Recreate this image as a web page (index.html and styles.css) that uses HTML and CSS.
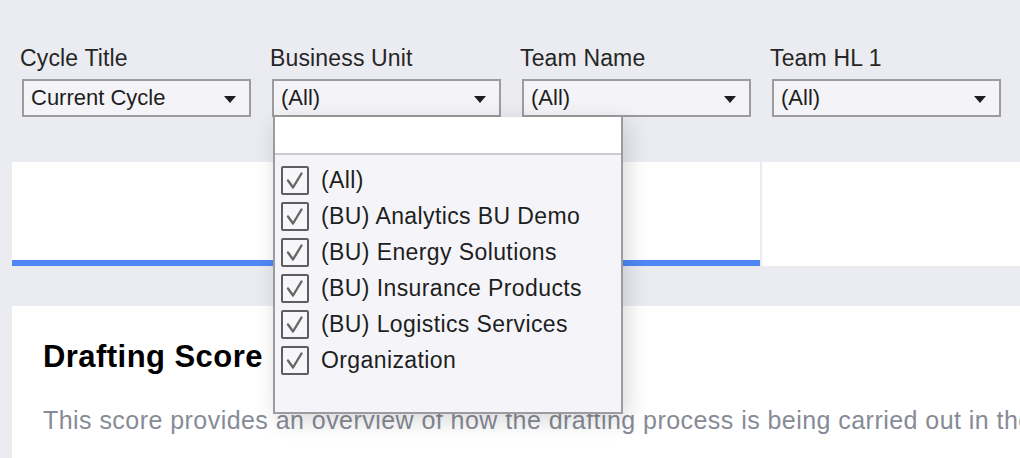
FILE: index.html
```html
<!DOCTYPE html>
<html lang="en">
<head>
<meta charset="utf-8">
<title>Drafting Score</title>
<link rel="stylesheet" href="styles.css">
</head>
<body>
<div class="page">
  <div class="filters">
    <div class="filter">
      <div class="filter-label">Cycle Title</div>
      <div class="select-wrap">
        <div class="select"><span class="select-value">Current Cycle</span><span class="arrow"></span></div>
      </div>
    </div>
    <div class="filter">
      <div class="filter-label">Business Unit</div>
      <div class="select-wrap">
        <div class="select"><span class="select-value">(All)</span><span class="arrow"></span></div>
        <div class="dropdown">
          <div class="dropdown-search"></div>
          <ul class="dropdown-list">
            <li class="option"><span class="checkbox"><svg viewBox="0 0 24 25" width="24" height="25"><path d="M5 12.5 L10 19.5 L18.5 5.5" fill="none" stroke="#686868" stroke-width="2.4" stroke-linecap="round" stroke-linejoin="round"/></svg></span><span class="option-text">(All)</span></li>
            <li class="option"><span class="checkbox"><svg viewBox="0 0 24 25" width="24" height="25"><path d="M5 12.5 L10 19.5 L18.5 5.5" fill="none" stroke="#686868" stroke-width="2.4" stroke-linecap="round" stroke-linejoin="round"/></svg></span><span class="option-text">(BU) Analytics BU Demo</span></li>
            <li class="option"><span class="checkbox"><svg viewBox="0 0 24 25" width="24" height="25"><path d="M5 12.5 L10 19.5 L18.5 5.5" fill="none" stroke="#686868" stroke-width="2.4" stroke-linecap="round" stroke-linejoin="round"/></svg></span><span class="option-text">(BU) Energy Solutions</span></li>
            <li class="option"><span class="checkbox"><svg viewBox="0 0 24 25" width="24" height="25"><path d="M5 12.5 L10 19.5 L18.5 5.5" fill="none" stroke="#686868" stroke-width="2.4" stroke-linecap="round" stroke-linejoin="round"/></svg></span><span class="option-text">(BU) Insurance Products</span></li>
            <li class="option"><span class="checkbox"><svg viewBox="0 0 24 25" width="24" height="25"><path d="M5 12.5 L10 19.5 L18.5 5.5" fill="none" stroke="#686868" stroke-width="2.4" stroke-linecap="round" stroke-linejoin="round"/></svg></span><span class="option-text">(BU) Logistics Services</span></li>
            <li class="option"><span class="checkbox"><svg viewBox="0 0 24 25" width="24" height="25"><path d="M5 12.5 L10 19.5 L18.5 5.5" fill="none" stroke="#686868" stroke-width="2.4" stroke-linecap="round" stroke-linejoin="round"/></svg></span><span class="option-text">Organization</span></li>
          </ul>
        </div>
      </div>
    </div>
    <div class="filter">
      <div class="filter-label">Team Name</div>
      <div class="select-wrap">
        <div class="select"><span class="select-value">(All)</span><span class="arrow"></span></div>
      </div>
    </div>
    <div class="filter">
      <div class="filter-label">Team HL 1</div>
      <div class="select-wrap">
        <div class="select"><span class="select-value">(All)</span><span class="arrow"></span></div>
      </div>
    </div>
  </div>

  <div class="tabs">
    <div class="tab tab-active"></div>
    <div class="tab"></div>
  </div>

  <div class="card">
    <h2 class="card-title">Drafting Score</h2>
    <p class="card-text">This score provides an overview of how the drafting process is being carried out in the organization.</p>
  </div>
</div>
</body>
</html>
```

FILE: styles.css
```css
html, body {
  margin: 0;
  padding: 0;
}

body {
  background: #ebecf1;
  font-family: "Liberation Sans", Arial, Helvetica, sans-serif;
  color: #222;
  overflow: hidden;
  width: 1020px;
  height: 458px;
}

.page {
  width: 1060px;
  padding-top: 44px;
}

.filters {
  display: flex;
  padding-left: 20px;
}

.filter {
  width: 250px;
}

.filter-label {
  font-size: 23px;
  line-height: 28px;
  letter-spacing: 0.15px;
  color: #262626;
  margin-bottom: 7px;
}

.select-wrap {
  position: relative;
  margin-left: 2px;
  width: 229px;
}

.select {
  width: 229px;
  height: 38px;
  box-sizing: border-box;
  border: 2px solid #9c9c9c;
  background: #f4f4f8;
  display: flex;
  align-items: center;
  justify-content: space-between;
  padding: 0 13px 0 7px;
}

.select-value {
  font-size: 22px;
  line-height: 34px;
  color: #1e1e1e;
}

.arrow {
  width: 0;
  height: 0;
  border-left: 6px solid transparent;
  border-right: 6px solid transparent;
  border-top: 7px solid #1e1e1e;
  margin-top: 2px;
}

.dropdown {
  position: absolute;
  left: 1px;
  top: 100%;
  width: 350px;
  height: 297px;
  box-sizing: border-box;
  border: 2px solid #9c9c9c;
  border-top: none;
  background: #f5f5f9;
  box-shadow: 4px 6px 22px rgba(0, 0, 0, 0.16);
  z-index: 5;
}

.dropdown-search {
  height: 36px;
  background: #ffffff;
  border-bottom: 2px solid #cbcbcf;
}

.dropdown-list {
  list-style: none;
  margin: 0;
  padding: 7px 0 0 6px;
}

.option {
  display: flex;
  align-items: center;
  height: 36px;
  gap: 12px;
}

.checkbox {
  width: 28px;
  height: 29px;
  box-sizing: border-box;
  border: 2px solid #5e5e5e;
  border-radius: 2px;
  background: #f7f7fa;
  display: flex;
  align-items: center;
  justify-content: center;
}

.checkbox svg {
  display: block;
}

.option-text {
  font-size: 23px;
  letter-spacing: 0.4px;
  line-height: 36px;
  color: #1e1e1e;
}

.tabs {
  display: flex;
  gap: 2px;
  margin: 45px 0 0 12px;
  height: 104px;
}

.tab {
  flex: 1;
  background: #ffffff;
}

.tab-active {
  flex: 0 0 748px;
  box-sizing: border-box;
  border-bottom: 6px solid #4f88f5;
}

.card {
  margin: 40px 0 0 12px;
  background: #ffffff;
  padding: 33px 0 40px 31px;
  height: 200px;
}

.card-title {
  margin: 0;
  font-size: 31px;
  line-height: 36px;
  font-weight: bold;
  letter-spacing: 0.45px;
  color: #000;
}

.card-text {
  margin: 30px 0 0 0;
  font-size: 25px;
  line-height: 30px;
  letter-spacing: 0.45px;
  color: #878b97;
  white-space: nowrap;
}
```
